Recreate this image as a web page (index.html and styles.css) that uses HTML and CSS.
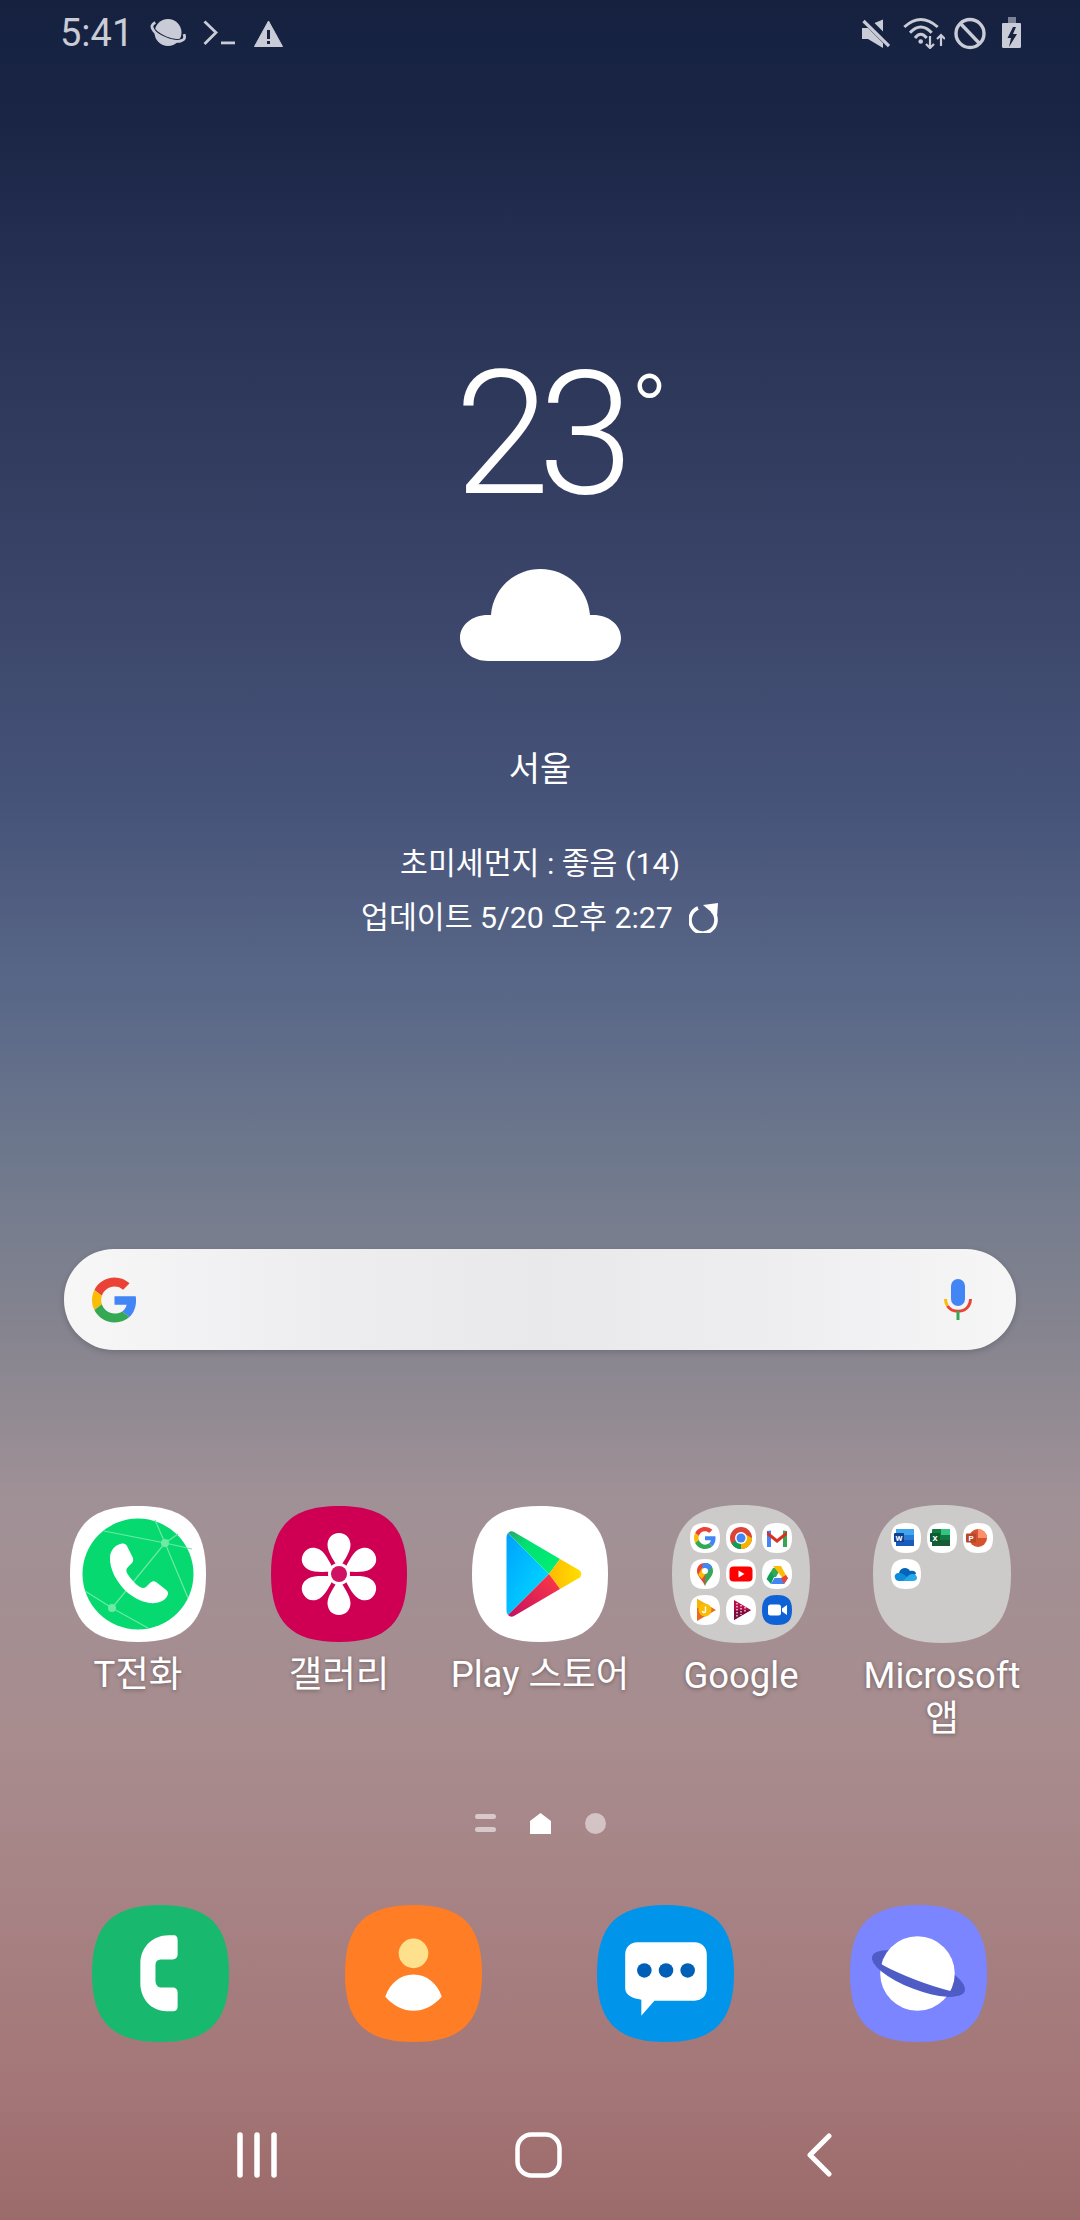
FILE: index.html
```html
<!DOCTYPE html>
<html lang="ko">
<head>
<meta charset="utf-8">
<title>Home</title>
<link rel="stylesheet" href="styles.css">
</head>
<body>
<svg class="defs" xmlns="http://www.w3.org/2000/svg">
  <symbol id="sq" viewBox="0 0 136 136"><path d="M68 0C116 0 136 20 136 68C136 116 116 136 68 136C20 136 0 116 0 68C0 20 20 0 68 0Z"/></symbol>
  <symbol id="g" viewBox="0 0 48 48">
    <path fill="#EA4335" d="M24 9.5c3.54 0 6.71 1.22 9.21 3.6l6.85-6.85C35.9 2.38 30.47 0 24 0 14.62 0 6.51 5.38 2.56 13.22l7.98 6.19C12.43 13.72 17.74 9.5 24 9.5z"/>
    <path fill="#4285F4" d="M46.98 24.55c0-1.57-.15-3.09-.38-4.55H24v9.02h12.94c-.58 2.96-2.26 5.48-4.78 7.18l7.73 6c4.51-4.18 7.09-10.36 7.09-17.65z"/>
    <path fill="#FBBC05" d="M10.53 28.59c-.48-1.45-.76-2.99-.76-4.59s.27-3.14.76-4.59l-7.98-6.19C.92 16.46 0 20.12 0 24c0 3.88.92 7.54 2.56 10.78l7.97-6.19z"/>
    <path fill="#34A853" d="M24 48c6.48 0 11.93-2.13 15.89-5.81l-7.73-6c-2.15 1.45-4.92 2.3-8.16 2.3-6.26 0-11.57-4.22-13.47-9.91l-7.98 6.19C6.51 42.62 14.62 48 24 48z"/>
  </symbol>
  <symbol id="pt" viewBox="0 0 136 136"><path d="M68 27C75 27 79.500 32 79.500 39C79.500 47 71 57 68 64C65 57 56.500 47 56.500 39C56.500 32 61 27 68 27Z"/></symbol>
</svg>

<main class="screen">
  <header class="status">
    <div class="status-left">
      <span class="time">5:41</span>
      <svg class="st st-planet" viewBox="0 0 37 30">
        <circle cx="18" cy="14.500" r="13.500" fill="#c9ccd6"/>
        <g transform="rotate(22 18 14.500)" fill="none">
          <path d="M3 15A15 5 0 0 0 33 15" stroke="#16223f" stroke-width="2.600"/>
          <path d="M2.500 10C0 13 0 15 2.500 17C8 22.500 28 22.500 33.500 17C36 15 36 13 33.500 10" stroke="#c9ccd6" stroke-width="2.800"/>
        </g>
      </svg>
      <svg class="st st-term" viewBox="0 0 33 26"><path d="M1.500 1.500L13 12.500L1.500 24" fill="none" stroke="#c9ccd6" stroke-width="2.800"/><rect x="18" y="21.500" width="14" height="2.800" fill="#c9ccd6"/></svg>
      <svg class="st st-warn" viewBox="0 0 29 27"><path d="M14.500 1L28.500 26.500H0.500Z" fill="#c9ccd6" stroke="#c9ccd6" stroke-linejoin="round"/><rect x="13" y="10" width="3" height="9" fill="#16223f"/><rect x="13" y="21" width="3" height="3" fill="#16223f"/></svg>
    </div>
    <div class="status-right">
      <svg class="st st-mute" viewBox="0 0 29 31"><path d="M13.500 5L22 1.500V13.500Z" fill="#c9ccd6"/><path d="M1 10H7L22 25V30L7 21H1Z" fill="#c9ccd6"/><path d="M2.500 3L28 28" stroke="#c9ccd6" stroke-width="3.200"/></svg>
      <svg class="st st-wifi" viewBox="0 0 43 32"><g fill="none" stroke="#c9ccd6" stroke-width="3"><path d="M2.300 10Q18.700 -5 35.700 10"/><path d="M8 15.700Q18.700 4.500 29.700 15.700"/><path d="M13 21Q18.700 13.600 24.700 21"/></g><circle cx="18.700" cy="24.500" r="2.300" fill="#c9ccd6"/><path d="M28 19V31M24 27L28 31L32 27" fill="none" stroke="#c9ccd6" stroke-width="2.200"/><path d="M39 29V18M35 22L39 18L43 22" fill="none" stroke="#c9ccd6" stroke-width="2.200"/></svg>
      <svg class="st st-no" viewBox="0 0 32 33"><circle cx="16" cy="16.500" r="14" fill="none" stroke="#c9ccd6" stroke-width="3.400"/><path d="M6 6L26 27" stroke="#c9ccd6" stroke-width="3.400"/></svg>
      <svg class="st st-batt" viewBox="0 0 22 33"><path d="M8 0H16V6H21V12H2V6H8Z" fill="#7d8296"/><rect x="2" y="6" width="19" height="25" rx="1.500" fill="#c9ccd6"/><path d="M13 10L7.500 21H11L9 30L17 17H13L16 10Z" fill="#16223f"/></svg>
    </div>
  </header>

  <section class="weather">
    <div class="temp">23<span class="deg">°</span></div>
    <svg class="cloud" viewBox="0 0 161 92"><path d="M28 92C12 92 0 81 0 69C0 56 12 46 28 46H31C33 20 54 0 80.500 0C107 0 128 20 130 46H133C149 46 161 56 161 69C161 81 149 92 133 92Z" fill="#fff"/></svg>
    <div class="city">서울</div>
    <div class="info info-dust">초미세먼지 : 좋음 (14)</div>
    <div class="info info-update">업데이트 5/20 오후 2:27
      <svg class="refresh" viewBox="0 0 30 30"><path d="M9 5A13 13 0 1 0 23 7.600" fill="none" stroke="#fff" stroke-width="3.600"/><path d="M14 2L29 0L28 14Z" fill="#fff"/></svg>
    </div>
  </section>

  <section class="search">
    <svg class="g-logo"><use href="#g"/></svg>
    <svg class="mic" viewBox="0 0 28 41">
      <rect x="7" y="0" width="14" height="27" rx="7" fill="#4285f4"/>
      <path d="M1.500 20C1.500 23 2 25 3.500 27" fill="none" stroke="#fbbc05" stroke-width="3"/>
      <path d="M3.500 27C8 34 20 34 24.500 27C26 25 26.500 23 26.500 20" fill="none" stroke="#ea4335" stroke-width="3"/>
      <rect x="12.500" y="32" width="3" height="9" fill="#34a853"/>
    </svg>
  </section>

  <section class="apps">
    <div class="app">
      <svg class="icon" viewBox="0 0 136 136">
        <use href="#sq" fill="#fff"/>
        <circle cx="68" cy="68" r="55.500" fill="#05d96f"/>
        <g stroke="#6ee9a6" stroke-width="1.200" fill="none">
          <path d="M34 25L95 37L122 43"/><path d="M85 14L95 37L118 92"/><path d="M108 28L95 37L42 102"/><path d="M15 85L42 102L78 122"/>
        </g>
        <circle cx="95" cy="37" r="4" fill="#6ee9a6"/><circle cx="42" cy="102" r="4" fill="#6ee9a6"/>
        <path d="M52 37.500C47 38 41 43 40 50C39 64 48 78 58 87C67 94 78 99 88 96.500C93 95.500 97 92 98 88C98.500 86 97 84.500 95 83L86 76C84 74.500 82 75 80 77L76 81C74 82.500 72 82 70 81C65 78 60 72 57 67C56 65 56 63 58 61L62 57C63.500 55.500 63.500 53 62.500 51L57 40C56 38 54 37.500 52 37.500Z" fill="#fff"/>
      </svg>
      <div class="label">T전화</div>
    </div>
    <div class="app">
      <svg class="icon" viewBox="0 0 136 136">
        <use href="#sq" fill="#cf0053"/>
        <g fill="#fff">
          <use href="#pt"/>
          <use href="#pt" transform="rotate(60 68 68)"/>
          <use href="#pt" transform="rotate(120 68 68)"/>
          <use href="#pt" transform="rotate(180 68 68)"/>
          <use href="#pt" transform="rotate(240 68 68)"/>
          <use href="#pt" transform="rotate(300 68 68)"/>
        </g>
        <circle cx="68" cy="68" r="11" fill="#fff"/>
        <circle cx="68" cy="68" r="8" fill="#cf1263"/>
      </svg>
      <div class="label">갤러리</div>
    </div>
    <div class="app">
      <svg class="icon" viewBox="0 0 136 136">
        <defs>
          <linearGradient id="pb" x1="0" y1="0" x2="1" y2="1"><stop offset="0" stop-color="#00a0ff"/><stop offset="1" stop-color="#00e3ff"/></linearGradient>
          <linearGradient id="pg" x1="0" y1="0" x2="1" y2="1"><stop offset="0" stop-color="#32a071"/><stop offset=".3" stop-color="#00e070"/><stop offset="1" stop-color="#00f076"/></linearGradient>
          <linearGradient id="py" x1="0" y1="0" x2="1" y2="0"><stop offset="0" stop-color="#ffb900"/><stop offset="1" stop-color="#ffdf00"/></linearGradient>
          <linearGradient id="pr" x1="1" y1="0" x2="0" y2="1"><stop offset="0" stop-color="#ff3a44"/><stop offset="1" stop-color="#c31162"/></linearGradient>
        </defs>
        <use href="#sq" fill="#fff"/>
        <path d="M36 27C35 28 34.500 30 34.500 32V104C34.500 106 35 108 36 109L77 68Z" fill="url(#pb)"/>
        <path d="M36 27C38 25 40 25 42 26L88 53L77 68Z" fill="url(#pg)"/>
        <path d="M88 53L107 64C110 66 110 70 107 72L88 83L77 68Z" fill="url(#py)"/>
        <path d="M77 68L88 83L42 110C40 111 38 111 36 109Z" fill="url(#pr)"/>
      </svg>
      <div class="label">Play 스토어</div>
    </div>
    <div class="app">
      <div class="folder">
        <svg class="folder-bg" viewBox="0 0 136 136"><use href="#sq" fill="#cdcaca"/></svg>
        <div class="minis">
          <svg class="mini" viewBox="0 0 30 30"><use href="#sq" width="30" height="30" fill="#fff"/><use href="#g" x="4" y="4" width="22" height="22"/></svg>
          <svg class="mini" viewBox="0 0 30 30"><use href="#sq" width="30" height="30" fill="#fff"/><circle cx="15" cy="15" r="11" fill="#db4437"/><path d="M15 15L5.500 20.500A11 11 0 0 0 15 26L20 15Z" fill="#0f9d58"/><path d="M15 15L15 26A11 11 0 0 0 26 15L15 9Z" fill="#f4b400"/><circle cx="15" cy="15" r="6" fill="#fff"/><circle cx="15" cy="15" r="4.500" fill="#4285f4"/></svg>
          <svg class="mini" viewBox="0 0 30 30"><use href="#sq" width="30" height="30" fill="#fff"/><path d="M5 24V8L9 7.500V24Z" fill="#4285f4"/><path d="M21 24V7.500L25 8V24Z" fill="#34a853"/><path d="M5 8L15 16L25 8V12L15 20L5 12Z" fill="#d93025"/></svg>
          <svg class="mini" viewBox="0 0 30 30"><use href="#sq" width="30" height="30" fill="#fff"/><path d="M15 4C10 4 7 7.500 7 12C7 18 13 21 15 27Z" fill="#ea4335"/><path d="M15 4C20 4 23 7.500 23 12C23 18 17 21 15 27Z" fill="#34a853"/><path d="M8 16L12 9L18 5L21 7L12 20Z" fill="#fbbc05"/><path d="M15 4C18 4 21 5.500 22 8L18 12L12 9C12 6 13 4 15 4Z" fill="#4285f4"/><circle cx="15" cy="12" r="3" fill="#fff"/></svg>
          <svg class="mini" viewBox="0 0 30 30"><use href="#sq" width="30" height="30" fill="#fff"/><rect x="3.500" y="7.500" width="23" height="15" rx="4" fill="#f00"/><path d="M12.500 11.500L18.500 15L12.500 18.500Z" fill="#fff"/></svg>
          <svg class="mini" viewBox="0 0 30 30"><use href="#sq" width="30" height="30" fill="#fff"/><path d="M11 6H19L14 15H5.500Z" fill="#34a853" transform="translate(0 3)"/><path d="M11 6H19L26 19H21.500Z" fill="#fbbc05" transform="translate(0 1)"/><path d="M4.500 20L9 13L12 18L9 25Z" fill="#0f9d58"/><path d="M9 25L12.500 19H26L22 25Z" fill="#4285f4"/><path d="M22 25L26 19L24 16L19 19Z" fill="#ea4335"/></svg>
          <svg class="mini" viewBox="0 0 30 30"><use href="#sq" width="30" height="30" fill="#fff"/><path d="M7 4L26 15L7 26Z" fill="#ea6a1f"/><path d="M7 4L22 13L7 13Z" fill="#f4b400"/><circle cx="15" cy="15" r="6.500" fill="#fbbc05"/><path d="M15.500 11.500V16C15.500 18 12.500 18 12.500 16" fill="none" stroke="#fff" stroke-width="1.400"/></svg>
          <svg class="mini" viewBox="0 0 30 30"><use href="#sq" width="30" height="30" fill="#fff"/><path d="M8 5L25 15L8 25Z" fill="#b80f4b"/><path d="M8 15H25L8 25Z" fill="#7c0b3f"/><path d="M11 8V22M15 10V20M19 12V18" stroke="#fff" stroke-width="1.200" stroke-dasharray="1.500 1.500"/></svg>
          <svg class="mini" viewBox="0 0 30 30"><use href="#sq" width="30" height="30" fill="#0e62d6"/><rect x="6" y="9.500" width="13" height="11" rx="2.500" fill="#fff"/><path d="M20 13.500L25 10V20L20 16.500Z" fill="#fff"/></svg>
        </div>
      </div>
      <div class="label">Google</div>
    </div>
    <div class="app">
      <div class="folder">
        <svg class="folder-bg" viewBox="0 0 136 136"><use href="#sq" fill="#cdcaca"/></svg>
        <div class="minis">
          <svg class="mini" viewBox="0 0 30 30"><use href="#sq" width="30" height="30" fill="#fff"/><rect x="5" y="6" width="18" height="17" rx="1" fill="#2b7cd3"/><rect x="5" y="6" width="18" height="6" fill="#41a5ee"/><rect x="5" y="17" width="18" height="6" fill="#185abd"/><rect x="3" y="10" width="10" height="9" rx="1" fill="#103f91"/><text class="mini-letter" x="8" y="17.500">W</text></svg>
          <svg class="mini" viewBox="0 0 30 30"><use href="#sq" width="30" height="30" fill="#fff"/><rect x="5" y="6" width="18" height="17" rx="1" fill="#107c41"/><rect x="14" y="6" width="9" height="6" fill="#33c481"/><rect x="5" y="17" width="18" height="6" fill="#185c37"/><rect x="3" y="10" width="10" height="9" rx="1" fill="#0b5c30"/><text class="mini-letter" x="8" y="17.500">X</text></svg>
          <svg class="mini" viewBox="0 0 30 30"><use href="#sq" width="30" height="30" fill="#fff"/><circle cx="15" cy="15" r="9" fill="#d35230"/><path d="M15 6A9 9 0 0 1 24 15H15Z" fill="#ff8f6b"/><rect x="3" y="10.500" width="10" height="9" rx="1" fill="#b7472a"/><text class="mini-letter" x="8" y="18">P</text></svg>
          <svg class="mini" viewBox="0 0 30 30"><use href="#sq" width="30" height="30" fill="#fff"/><path d="M8 14C9 9 16 7 19 12C23 11 25 13 25 15L15 20Z" fill="#0364b8"/><path d="M4 19C3 16 5 14 8 14C11 14 14 16 16 18L18 22H8C6 22 4.500 21 4 19Z" fill="#0f8cd8"/><path d="M12 22L18 16C21 14 26 15 26 19C26 21 24 22 22 22Z" fill="#28a8ea"/></svg>
        </div>
      </div>
      <div class="label">Microsoft<br>앱</div>
    </div>
  </section>

  <nav class="pager">
    <svg class="pg pg-menu" viewBox="0 0 21 21"><rect x="0" y="1" width="21" height="5" rx="2.500"/><rect x="0" y="14" width="21" height="5" rx="2.500"/></svg>
    <svg class="pg pg-home" viewBox="0 0 21 21"><path d="M10.500 0L21 8V21H0V8Z"/></svg>
    <svg class="pg pg-dot" viewBox="0 0 21 21"><circle cx="10.500" cy="10.500" r="10.500"/></svg>
  </nav>

  <section class="dock">
    <svg class="dock-icon" viewBox="0 0 136 136"><use href="#sq" fill="#18b96e"/><path d="M81 30C84 30 85 32 85 35V49C85 52 83 54 80 54H69C65 54 63 56 63 60V75C63 79 65 82 69 82H80C83 82 85 84 85 87V101C85 104 83 105.500 80 105.500H74C58 105.500 48 92 48 78V58C48 42 60 30 76 30Z" fill="#fff"/></svg>
    <svg class="dock-icon" viewBox="0 0 136 136"><use href="#sq" fill="#ff7d24"/><circle cx="68" cy="48" r="14.700" fill="#ffe08c"/><path d="M40 91C44 78 55 69 68 69C81 69 92 78 96 91C88 100 78 105 68 105C58 105 48 100 40 91Z" fill="#fff"/></svg>
    <svg class="dock-icon" viewBox="0 0 136 136"><use href="#sq" fill="#0094ea"/><path d="M40 37H97C104 37 109 42 109 49V83C109 90 104 95 97 95H57L44 110V94C36 93 28 90 28 83V49C28 42 33 37 40 37Z" fill="#fff"/><circle cx="47" cy="65" r="7.200" fill="#0060b8"/><circle cx="68.500" cy="65" r="7.200" fill="#0060b8"/><circle cx="90" cy="65" r="7.200" fill="#0060b8"/></svg>
    <svg class="dock-icon" viewBox="0 0 136 136"><use href="#sq" fill="#7a85ff"/><g transform="rotate(21 68 68)"><ellipse cx="68" cy="68" rx="49" ry="16" fill="#4f5cc6"/></g><circle cx="67" cy="68" r="37" fill="#fff"/><g transform="rotate(21 68 68)"><path d="M19 68A49 16 0 0 0 117 68A49 7 0 0 1 19 68Z" fill="#4f5cc6"/></g></svg>
  </section>

  <footer class="nav">
    <svg class="nav-recents" viewBox="0 0 44 46"><g stroke="#fff" stroke-width="5.500" stroke-linecap="round"><path d="M5 3V43"/><path d="M22 3V43"/><path d="M39 3V43"/></g></svg>
    <svg class="nav-home" viewBox="0 0 47 46"><rect x="2.500" y="2.500" width="42" height="41" rx="14" fill="none" stroke="#fff" stroke-width="4.500"/></svg>
    <svg class="nav-back" viewBox="0 0 25 46"><path d="M22 4L3 23L22 42" fill="none" stroke="#fff" stroke-width="5" stroke-linecap="round" stroke-linejoin="round"/></svg>
  </footer>
</main>
</body>
</html>
```

FILE: styles.css
```css
* { box-sizing: border-box; }
html, body { margin: 0; padding: 0; }
body { width: 1080px; height: 2220px; overflow: hidden; font-family: "Roboto", "Noto Sans CJK KR", sans-serif; }
.defs { display: none; }

.screen {
  width: 1080px;
  height: 2220px;
  display: flex;
  flex-direction: column;
  color: #fff;
  background: linear-gradient(180deg, #15213f 0, #1a2546 120px, #2b3558 340px, #3b4569 600px, #465379 800px, #5a6888 1000px, #717a8d 1180px, #85848f 1330px, #a09196 1500px, #a88c8e 1740px, #a78486 1880px, #a47576 2100px, #9b6a6b 2220px);
}

/* status bar */
.status { height: 66px; padding: 0 58px 0 60px; display: flex; justify-content: space-between; align-items: center; flex: none; }
.status-left, .status-right { display: flex; align-items: center; }
.time { font-size: 38px; line-height: 66px; color: #c9ccd6; width: 90px; font-weight: 400; }
.st { display: block; flex: none; }
.st-planet { width: 37px; height: 30px; }
.st-term { width: 33px; height: 26px; margin-left: 16px; }
.st-warn { width: 29px; height: 27px; margin-left: 18px; }
.st-mute { width: 29px; height: 31px; }
.st-wifi { width: 43px; height: 32px; margin-left: 12px; }
.st-no { width: 32px; height: 33px; margin-left: 9px; }
.st-batt { width: 22px; height: 33px; margin-left: 14px; }

/* weather */
.weather { display: flex; flex-direction: column; align-items: center; flex: none; }
.temp { margin-top: 282px; margin-right: 4px; font-size: 172px; line-height: 172px; font-weight: 300; letter-spacing: -12px; position: relative; }
.deg { font-size: 100px; letter-spacing: 0; position: absolute; left: 100%; top: -22px; font-weight: 300; margin-left: 9px; }
.cloud { display: block; width: 161px; height: 92px; margin-top: 49px; }
.city { margin-top: 88px; font-size: 34px; line-height: 40px; }
.info { font-size: 30.300px; line-height: 54px; display: flex; align-items: center; }
.info-dust { margin-top: 48px; }
.refresh { width: 30px; height: 30px; margin-left: 16px; }

/* search */
.search { margin: 304px 64px 0; height: 101px; border-radius: 50px; padding: 0 44px 0 28px; display: flex; justify-content: space-between; align-items: center; flex: none; background: linear-gradient(90deg, #f7f7f8 0, #eeeef0 25%, #e9e9eb 50%, #eeeef0 75%, #f6f6f7 100%); box-shadow: 0 2px 6px rgba(0,0,0,.18); }
.g-logo { width: 45px; height: 46px; }
.mic { width: 28px; height: 41px; }

/* apps */
.apps { margin-top: 155px; padding-left: 37.5px; display: grid; grid-template-columns: repeat(5, 201px); height: 237px; flex: none; }
.app { display: flex; flex-direction: column; align-items: center; }
.icon { display: block; width: 136px; height: 136px; margin-top: 1px; }
.folder { position: relative; width: 138px; height: 138px; }
.folder-bg { display: block; width: 138px; height: 138px; }
.minis { position: absolute; left: 18px; top: 18px; display: grid; grid-template-columns: repeat(3, 30px); grid-auto-rows: 30px; gap: 6px; }
.mini { display: block; width: 30px; height: 30px; }
.mini-letter { font: 700 8px "Roboto", sans-serif; fill: #fff; text-anchor: middle; }
.label { margin-top: 11px; font-size: 36.500px; line-height: 43px; text-align: center; white-space: nowrap; color: #fff; text-shadow: 0 1px 4px rgba(0,0,0,.35); }

/* pager */
.pager { margin-top: 71px; height: 21px; display: flex; justify-content: center; gap: 34px; flex: none; }
.pg { display: block; width: 21px; height: 21px; fill: #fff; }
.pg-menu { fill: rgba(255,255,255,.55); }
.pg-dot { fill: rgba(255,255,255,.5); }

/* dock */
.dock { margin-top: 71px; padding-left: 92px; display: flex; gap: 115.5px; flex: none; }
.dock-icon { display: block; width: 137px; height: 137px; }

/* nav */
.nav { margin-top: 90px; padding-left: 235px; display: flex; flex: none; }
.nav-recents { width: 44px; height: 46px; }
.nav-home { width: 47px; height: 46px; margin-left: 236px; }
.nav-back { width: 25px; height: 46px; margin-left: 245px; }
```
